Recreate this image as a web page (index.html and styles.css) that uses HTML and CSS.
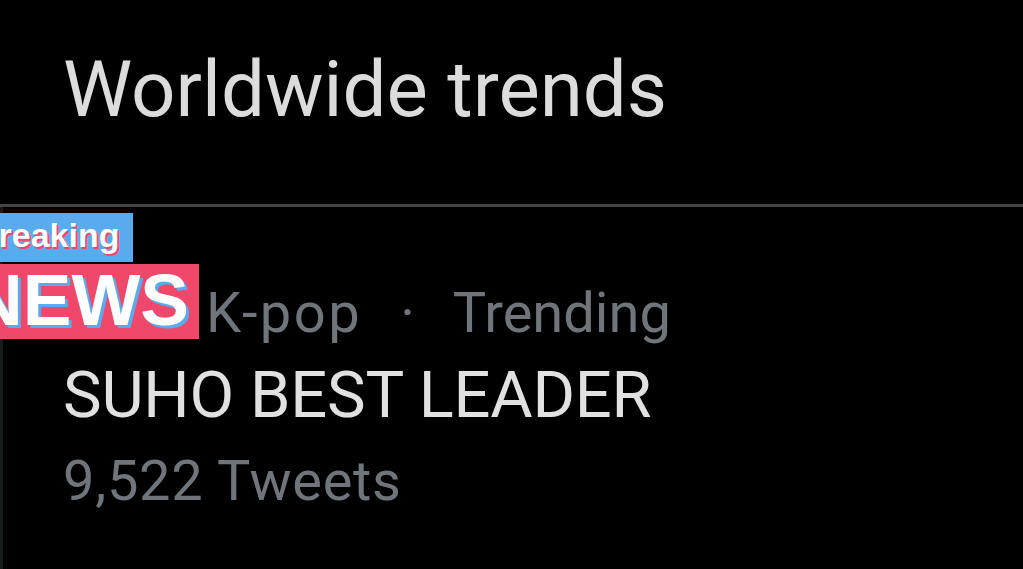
FILE: index.html
```html
<!DOCTYPE html>
<html lang="en">
<head>
<meta charset="utf-8">
<title>Worldwide trends</title>
<link rel="stylesheet" href="styles.css">
</head>
<body>
<main class="panel">
  <header class="panel-header">
    <h1 class="panel-title">Worldwide trends</h1>
  </header>
  <section class="trend">
    <div class="trend-meta"><span class="category">K-pop</span><span class="dot">·</span><span>Trending</span></div>
    <div class="trend-name">SUHO BEST LEADER</div>
    <div class="trend-count">9,522 Tweets</div>
  </section>
</main>
<div class="sticker">
  <div class="sticker-top">Breaking</div>
  <div class="sticker-bottom">NEWS</div>
</div>
</body>
</html>
```
FILE: styles.css
```css
html, body {
  margin: 0;
  padding: 0;
  background: #000;
  width: 1023px;
  height: 569px;
  overflow: hidden;
}

body {
  font-family: Roboto, "Liberation Sans", sans-serif;
  position: relative;
}

.panel {
  display: flex;
  flex-direction: column;
  height: 100%;
}

.panel-header {
  padding: 45px 0 69px 63px;
  border-bottom: 3px solid #444;
}

.panel-title {
  margin: 0;
  font-size: 78px;
  font-weight: 400;
  line-height: 90px;
  color: #dcdcdc;
}

.trend {
  flex: 1;
  padding: 73px 0 0 60px;
  border-left: 3px solid #161a1b;
}

.trend-meta {
  display: flex;
  align-items: baseline;
  padding-left: 143px;
  font-size: 56px;
  line-height: 66px;
  color: #6f757a;
}

.category {
  letter-spacing: 2.5px;
}

.dot {
  margin: 0 38px;
}

.trend-name {
  font-size: 65px;
  line-height: 98px;
  color: #e1e1e1;
  letter-spacing: -0.2px;
}

.trend-count {
  font-size: 56px;
  line-height: 74px;
  color: #6f757a;
  letter-spacing: 0.7px;
}

.sticker {
  position: absolute;
  left: -40px;
  top: 213px;
  display: flex;
  flex-direction: column;
  align-items: flex-start;
  gap: 2px;
  font-family: "Liberation Sans", Arial, sans-serif;
  font-weight: 700;
  color: #fff;
}

.sticker-top {
  background: #5aaaee;
  font-size: 34px;
  line-height: 45px;
  padding: 0 13px 4px 14px;
  text-shadow: 2px 2px 0 #f0486a;
}

.sticker-bottom {
  background: #f0486a;
  font-size: 73px;
  line-height: 71px;
  padding: 0 10px 4px 10px;
  text-shadow: 3px 3px 0 #5aaaee;
}
```
